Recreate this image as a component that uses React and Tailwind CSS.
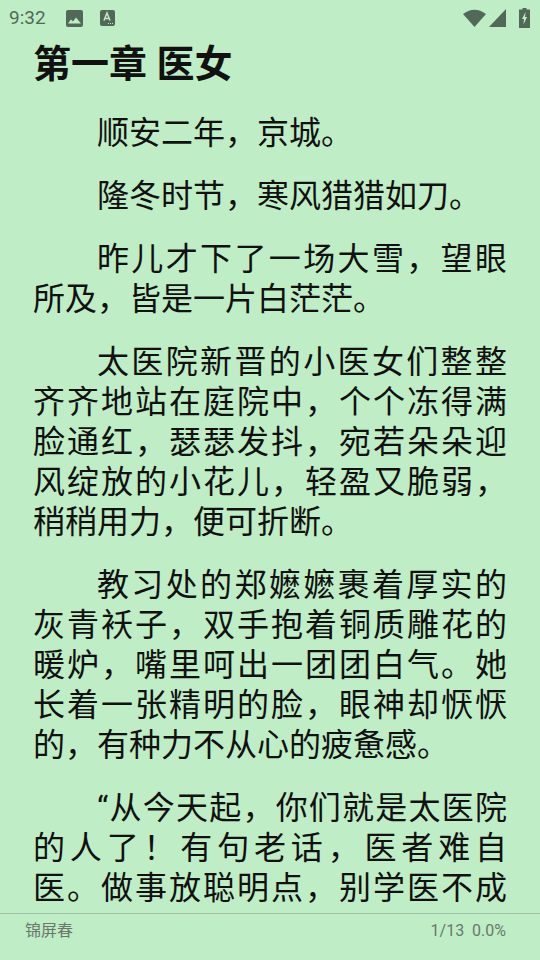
function StatusBar() {
  return (
    <div className="flex items-center justify-between h-[36px] pl-[9px] pr-[10px] text-[#52695a] shrink-0">
      <div className="flex items-center">
        <span className="text-[19px] font-['Roboto',sans-serif] w-[57px]">9:32</span>
        <svg width="17" height="17" viewBox="0 0 17 17" className="mr-[17px]">
          <rect x="0" y="0" width="17" height="17" rx="2" fill="currentColor" />
          <path d="M2 13.5 L5 9.5 L7 11.5 L10 7.5 L15 13.5 Z" fill="#bfedc6" />
        </svg>
        <svg width="15" height="16" viewBox="0 0 15 16">
          <rect x="0" y="0" width="15" height="16" rx="2" fill="currentColor" />
          <path d="M4 10.5 L7 3 L10 10.5 M5 8.5 H9" fill="none" stroke="#bfedc6" strokeWidth="1.5" />
          <path d="M8 13.5 h1 M10 13.5 h1 M12 13.5 h1" stroke="#bfedc6" strokeWidth="1" />
        </svg>
      </div>
      <div className="flex items-center gap-[3px]">
        <svg width="23" height="18" viewBox="0 0 23 18">
          <path d="M0 5 Q11.5 -3.5 23 5 L11.5 18 Z" fill="currentColor" />
        </svg>
        <svg width="17" height="18" viewBox="0 0 17 18" className="mr-[10px]">
          <path d="M17 0 V18 H0 Z" fill="currentColor" />
        </svg>
        <svg width="11" height="20" viewBox="0 0 11 20">
          <path d="M3.5 0 H7.5 V1.5 H11 V20 H0 V1.5 H3.5 Z" fill="currentColor" />
          <path d="M6.5 4 L3 11 H5 L4.5 16.5 L8 9 H6 Z" fill="#bfedc6" />
        </svg>
      </div>
    </div>
  );
}

const paragraphs = [
  "顺安二年，京城。",
  "隆冬时节，寒风猎猎如刀。",
  "昨儿才下了一场大雪，望眼所及，皆是一片白茫茫。",
  "太医院新晋的小医女们整整齐齐地站在庭院中，个个冻得满脸通红，瑟瑟发抖，宛若朵朵迎风绽放的小花儿，轻盈又脆弱，稍稍用力，便可折断。",
  "教习处的郑嬷嬷裹着厚实的灰青袄子，双手抱着铜质雕花的暖炉，嘴里呵出一团团白气。她长着一张精明的脸，眼神却恹恹的，有种力不从心的疲惫感。",
];

export default function App() {
  return (
    <div className="w-[540px] h-[960px] bg-[#bfedc6] flex flex-col overflow-hidden font-['Roboto','Noto_Sans_CJK_SC',sans-serif]">
      <StatusBar />
      <div className="flex-1 min-h-0 overflow-hidden pl-[33px] pr-[33px] text-[#111]">
        <h1 className="text-[38px] leading-[56px] font-bold">第一章 医女</h1>
        <div className="mt-[21px]">
          {paragraphs.map((p, i) => (
            <p key={i} className="text-[32px] leading-[40px] indent-[64px] text-justify mb-[23px]">
              {p}
            </p>
          ))}
          <p className="text-[32px] leading-[40px] indent-[64px] text-justify [text-align-last:justify]">
            “从今天起，你们就是太医院的人了！有句老话，医者难自医。做事放聪明点，别学医不成
          </p>
        </div>
      </div>
      <div className="h-[47px] shrink-0 border-t border-[#9dbfa3] flex justify-between pl-[25px] pr-[34px] pt-[5px] text-[16px] leading-[24px] text-[#6a776d]">
        <span>锦屏春</span>
        <span>1/13&nbsp;&nbsp;0.0%</span>
      </div>
    </div>
  );
}
